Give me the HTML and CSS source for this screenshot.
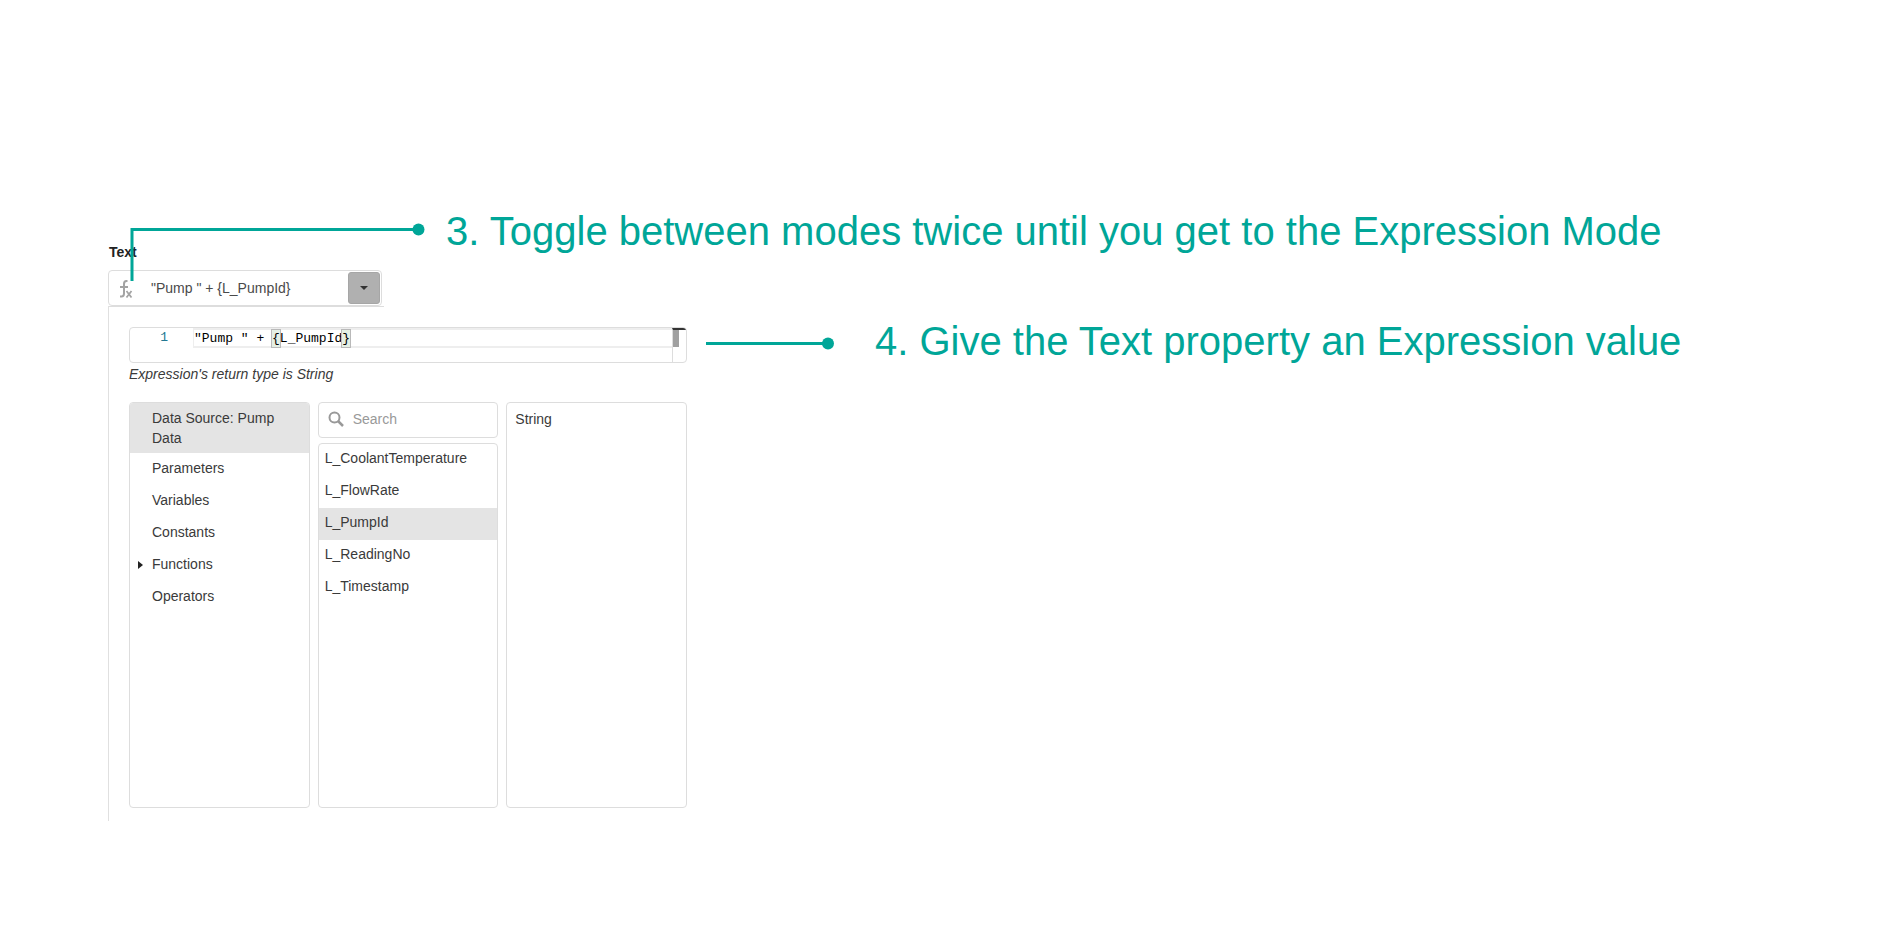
FILE: index.html
```html
<!DOCTYPE html>
<html lang="en">
<head>
<meta charset="utf-8">
<title>Expression property</title>
<link rel="stylesheet" href="styles.css">
</head>
<body>
<main class="page">
  <section class="property">
    <label class="property-label" for="value">Text</label>
    <div class="field">
      <svg class="fx" width="24" height="22" viewBox="0 0 24 22" fill="none" stroke="#a3a3a3" stroke-width="2"><path d="M10.500 4H9.500Q7 4 7 7V16.500Q7 19.500 4.500 19.500H3M3 10H11"/><path d="M9.500 14L14.500 20.500M14.500 14L9.500 20.500" stroke-width="1.700"/></svg>
      <input class="field-input" id="value" type="text" value="&quot;Pump &quot; + {L_PumpId}">
      <button class="field-toggle" type="button" aria-label="Open"><svg width="8" height="4" viewBox="0 0 8 4"><path d="M0 0H8L4 4Z" fill="#333"/></svg></button>
    </div>
    <div class="panel">
      <div class="editor">
        <span class="line-number">1</span>
        <code class="code">"Pump " + <span class="brace">{</span>L_PumpId<span class="brace">}</span></code>
        <div class="ruler"><div class="slider"></div></div>
      </div>
      <p class="hint">Expression's return type is String</p>
      <div class="columns">
        <ul class="box categories">
          <li class="selected">Data Source: Pump Data</li>
          <li>Parameters</li>
          <li>Variables</li>
          <li>Constants</li>
          <li class="expandable">Functions</li>
          <li>Operators</li>
        </ul>
        <div class="middle">
          <label class="box search">
            <svg width="16" height="16" viewBox="0 0 16 16" fill="none" stroke="#999" stroke-width="2"><circle cx="6.500" cy="6.500" r="5"/><path d="M10 10L15 15" stroke-width="2.500"/></svg>
            <input class="search-input" type="text" placeholder="Search" aria-label="Search">
          </label>
          <ul class="box fields">
            <li>L_CoolantTemperature</li>
            <li>L_FlowRate</li>
            <li class="selected">L_PumpId</li>
            <li>L_ReadingNo</li>
            <li>L_Timestamp</li>
          </ul>
        </div>
        <div class="box description">String</div>
      </div>
    </div>
  </section>
  <div class="callout callout-mode">
    <svg width="296" height="60" viewBox="0 0 296 60"><path d="M2 58V6.500H289" fill="none" stroke="#00a698" stroke-width="3"/><circle cx="288.500" cy="6.500" r="6" fill="#00a698"/></svg>
    <p class="callout-text">3. Toggle between modes twice until you get to the Expression Mode</p>
  </div>
  <div class="callout callout-value">
    <svg width="130" height="13" viewBox="0 0 130 13"><path d="M0 6.500H122" fill="none" stroke="#00a698" stroke-width="3"/><circle cx="122" cy="6.500" r="6" fill="#00a698"/></svg>
    <p class="callout-text">4. Give the Text property an Expression value</p>
  </div>
</main>
</body>
</html>
```
FILE: styles.css
```css
* { box-sizing: border-box; }
body {
  margin: 0;
  background: #fff;
  color: #3a3a3a;
  font: 14px/20px "Liberation Sans", Arial, sans-serif;
}
p, ul { margin: 0; padding: 0; }
ul { list-style: none; }
.page { position: relative; padding: 242px 0 0 108px; }
.property { max-width: 599px; }
.property-label {
  display: block;
  padding-left: 1px;
  color: #222;
  font-size: 14px;
  font-weight: bold;
}
.field {
  display: flex;
  align-items: center;
  width: 274px;
  height: 36px;
  margin-top: 8px;
  padding: 0 1px 0 8px;
  border: 1px solid #ddd;
  border-radius: 4px;
}
.fx { flex: none; margin-right: 10px; }
.field-input {
  flex: 1;
  min-width: 0;
  padding: 0;
  border: 0;
  outline: 0;
  background: none;
  color: #4a4a4a;
  font: inherit;
}
.field-toggle {
  display: grid;
  place-items: center;
  width: 32px;
  height: 32px;
  padding: 0;
  border: 1px solid #a6a6a6;
  border-radius: 3px;
  background: #b0b0b0;
}
.panel {
  position: relative;
  padding: 21px 20px 13px;
  border-left: 1px solid #e0e0e0;
}
.panel::before {
  content: "";
  position: absolute;
  top: 0;
  left: 0;
  width: 275px;
  border-top: 1px solid #ddd;
}
.editor {
  display: flex;
  height: 36px;
  border: 1px solid #ddd;
  border-radius: 4px;
  overflow: hidden;
  font: 13px/19px "Liberation Mono", monospace;
}
.line-number {
  width: 63px;
  padding-right: 25px;
  color: #237893;
  text-align: right;
}
.code {
  display: flex;
  align-items: center;
  flex: 1;
  height: 20px;
  border: 2px solid #eee;
  border-right: 0;
  border-left-width: 1px;
  color: #000;
  font: inherit;
  white-space: pre;
}
.brace { outline: 1px solid #b9b9b9; background: #e4efe4; line-height: 17px; }
.ruler {
  width: 14px;
  border-left: 1px solid #ddd;
  border-top: 2px solid #333;
}
.slider { width: 6px; height: 17px; background: #a0a0a0; }
.hint { padding-top: 1px; font-style: italic; }
.columns {
  display: grid;
  grid-template-columns: repeat(3, 1fr);
  gap: 8px;
  height: 406px;
  margin-top: 18px;
}
.box { border: 1px solid #ddd; border-radius: 4px; overflow: hidden; }
.categories li { position: relative; padding: 5px 22px 7px; }
.categories .selected { padding-bottom: 5px; }
.selected { background: #e4e4e4; }
.expandable::before {
  content: "";
  position: absolute;
  top: 12px;
  left: 8px;
  border: 4px solid transparent;
  border-left: 5px solid #222;
  border-right: 0;
}
.middle { display: flex; flex-direction: column; gap: 5px; min-width: 0; }
.search { display: flex; align-items: center; gap: 9px; height: 36px; padding: 0 9px 2px; }
.search svg { flex: none; }
.search-input {
  flex: 1;
  min-width: 0;
  padding: 0;
  border: 0;
  outline: 0;
  font: inherit;
}
.search-input::placeholder { color: #999; opacity: 1; }
.fields { flex: 1; }
.fields li { padding: 4px 6px 8px; }
.description { padding: 6px 8px; }
.callout { position: absolute; display: flex; color: #00a698; }
.callout svg { flex: none; }
.callout-text { font-size: 40px; line-height: 46px; white-space: nowrap; }
.callout-mode { top: 223px; left: 130px; gap: 20px; }
.callout-mode .callout-text { margin-top: -15px; }
.callout-value { top: 318px; left: 706px; gap: 39px; align-items: center; }
.callout-value svg { margin-top: 4px; }
```
